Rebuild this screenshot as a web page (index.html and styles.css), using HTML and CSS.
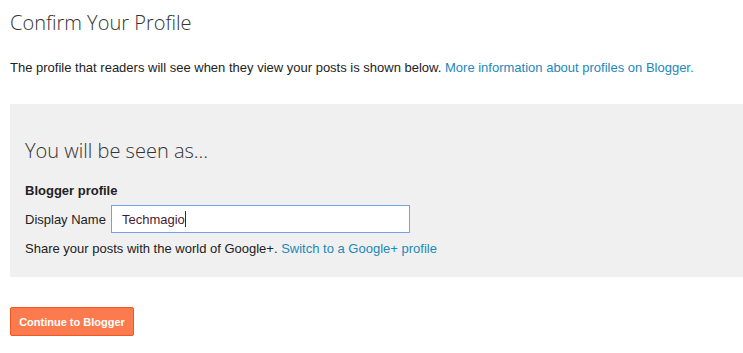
FILE: index.html
```html
<!DOCTYPE html>
<html lang="en">
  <head>
    <meta charset="UTF-8" />
    <title>Confirm Your Profile</title>
    <link rel="stylesheet" href="styles.css">
  </head>
  <body>
    <div class="page">
      <h1>Confirm Your Profile</h1>
      <p class="intro">
        The profile that readers will see when they view your posts is shown below.
        <a href="#">More information about profiles on Blogger.</a>
      </p>

      <div class="panel">
        <h2>You will be seen as...</h2>
        <h3>Blogger profile</h3>
        <div class="field">
          <label for="display-name">Display Name</label>
          <div class="input"><span>Techmagio</span><i class="caret"></i></div>
        </div>
        <p class="share">
          Share your posts with the world of Google+.
          <a href="#">Switch to a Google+ profile</a>
        </p>
      </div>

      <button class="continue">Continue to Blogger</button>
    </div>
  </body>
</html>
```
FILE: styles.css
```css
* {
  margin: 0;
  padding: 0;
  box-sizing: border-box;
}
body {
  background: #ffffff;
  font-family: "Liberation Sans", Arial, sans-serif;
  font-size: 13px;
  color: #222222;
}
a {
  color: #2288bb;
  text-decoration: none;
}
.page {
  padding: 10px 0 0 10px;
}
h1,
h2 {
  font-family: "Open Sans", sans-serif;
  font-weight: 300;
  font-size: 20px;
  color: #333333;
  line-height: 26px;
}
.intro {
  margin-top: 24px;
  line-height: 16px;
}
.panel {
  margin-top: 28px;
  background: #f0f0f0;
  height: 173px;
  padding: 34px 15px 0;
}
.panel h3 {
  margin-top: 19px;
  font-size: 13px;
  font-weight: bold;
  line-height: 16px;
}
.field {
  display: flex;
  align-items: center;
  gap: 5px;
  margin-top: 6px;
}
.input {
  display: flex;
  align-items: center;
  width: 299px;
  height: 28px;
  background: #ffffff;
  border: 1px solid #6fa3ec;
  padding-left: 10px;
  color: #4a1a33;
}
.caret {
  width: 1px;
  height: 16px;
  background: #4a1a33;
}
.share {
  margin-top: 8px;
  line-height: 16px;
}
.continue {
  margin-top: 30px;
  height: 29px;
  width: 124px;
  background: #fb7b4e;
  border: 1px solid #f3561f;
  border-radius: 2px;
  color: #ffffff;
  font-family: "Liberation Sans", Arial, sans-serif;
  font-size: 11px;
  font-weight: bold;
}
```
